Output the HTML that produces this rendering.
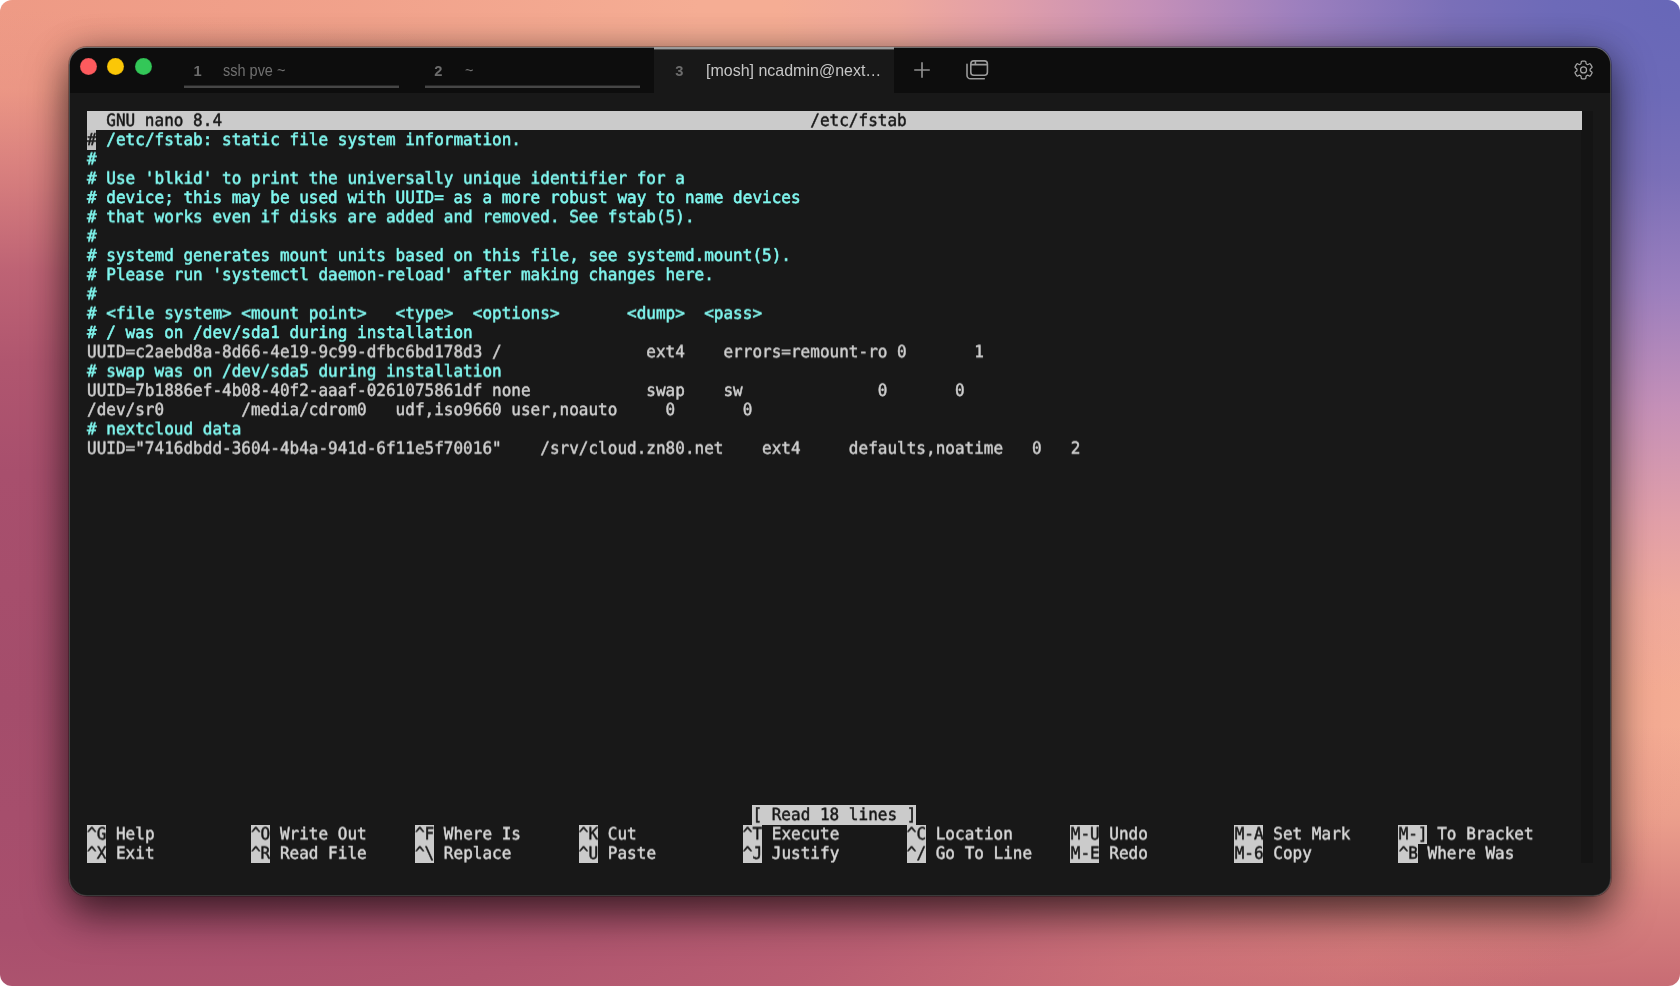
<!DOCTYPE html>
<html lang="en">
<head>
<meta charset="utf-8">
<title>nano /etc/fstab</title>
<style>
html,body{margin:0;padding:0;background:#fff;}
body{width:1680px;height:986px;position:relative;overflow:hidden;font-family:"Liberation Sans",sans-serif;}
#bg{position:absolute;left:0;top:0;width:1680px;height:986px;border-radius:12px;overflow:hidden;
 background:
  radial-gradient(ellipse 900px 690px at 100% 0%, #6767b8 0%, #6d6ab8 14%, #7a6fb8 25.5%, #9c7fbe 42%, #c590b8 59%, rgba(224,158,170,.92) 75.5%, rgba(234,165,164,.5) 87%, rgba(240,170,160,0) 100%),
  radial-gradient(ellipse 1600px 650px at 0% 700px, #a44d6b 0%, #a84f6d 35%, #b0566f 52%, rgba(184,92,114,.9) 66%, rgba(203,110,120,.62) 82%, rgba(222,130,125,.24) 94%, rgba(228,138,128,0) 106%),
  linear-gradient(to top, #c86c74 0, rgba(203,112,118,.72) 80px, rgba(214,127,122,.3) 170px, rgba(220,130,125,0) 260px),
  radial-gradient(ellipse 700px 500px at 0% 0%, #ee9a85 0%, rgba(238,154,133,.6) 50%, rgba(238,154,133,0) 100%),
  #f5ad94;
}
#win{position:absolute;left:69px;top:47px;width:1542px;height:849px;border-radius:18px;
 background:linear-gradient(#6c6c6c 0,#505050 12px,#464646 60px,#444 800px,#3a3a3a 100%);
 box-shadow:0 0 0 1px rgba(0,0,0,.26), 0 20px 42px rgba(0,0,0,.54), 0 2px 34px rgba(0,0,0,.3);}
#wi{position:absolute;left:1px;top:1px;right:1px;bottom:1px;border-radius:17px;overflow:hidden;background:#181818;}
#wo{position:absolute;left:-1px;top:-1px;width:1542px;height:849px;}
#tb{position:absolute;left:0;top:0;width:100%;height:46px;background:#0d0d0d;}
.tl{position:absolute;top:10.9px;width:17px;height:17px;border-radius:50%;box-shadow:inset 0 0 0 .6px rgba(0,0,0,.14);}
.tn{position:absolute;font-weight:bold;font-size:14.7px;line-height:20px;color:#6c6c6c;top:13.5px;}
.tx{position:absolute;font-size:16.2px;line-height:20px;color:#707070;top:13.4px;white-space:nowrap;transform-origin:0 50%;}
.ul{position:absolute;height:3px;width:214.7px;background:linear-gradient(#262626 0 1px,#464646 1px 3px);top:38px;}
#tt{position:absolute;left:0;top:0;width:100%;height:46px;will-change:transform;}
#t3{position:absolute;top:0;height:46px;left:584.6px;width:240.3px;background:#181818;}
#t3h{position:absolute;left:584.6px;top:0;width:240.3px;height:3px;background:linear-gradient(#9a9a9a 0 2px,#4c4c4c 2px 3px);}
#term{position:absolute;left:0;top:0;width:1680px;height:986px;font-family:"DejaVu Sans Mono","Liberation Mono",monospace;font-size:16px;letter-spacing:0.0106px;-webkit-text-stroke:0.45px;}
.r{position:absolute;left:86.85px;height:19.285px;line-height:19.285px;white-space:pre;color:#cfcfcf;transform-origin:0 0;will-change:transform;}
.g{transform-origin:0 0;transform:scaleY(1.05) skewX(.05deg);}
.r.c{color:#80f8f0;-webkit-text-stroke-width:.5px;}
.r.w{color:#d8d8d8;}
.inv,.cur{color:#141414;}
.b{position:absolute;background:#cbcbcb;}
.b.cu{background:#c0c0c0;}
#sb{position:absolute;left:1581px;top:111px;width:12px;height:752px;background:#141414;}
</style>
</head>
<body>
<div id="bg"></div>
<div id="win"><div id="wi"><div id="wo">
 <div id="tb">
  <div class="tl" style="left:10.7px;background:#fe5b5e"></div>
  <div class="tl" style="left:38.4px;background:#fbc707"></div>
  <div class="tl" style="left:66.2px;background:#33c758"></div>
  <div id="t3"></div>
  <div class="ul" style="left:115.3px"></div>
  <div class="ul" style="left:356.3px"></div>
  <div id="tt"><span class="tn" style="left:124.6px">1</span><span class="tx" style="left:154.3px;transform:scaleX(.895)">ssh pve ~</span>
  <span class="tn" style="left:365.3px">2</span><span class="tx" style="left:395.5px;transform:scaleX(.895)">~</span>
  <span class="tn" style="left:606.2px">3</span><span class="tx" style="left:636.5px;color:#c6c6c6;transform:scaleX(.988)">[mosh] ncadmin@next…</span></div>
  <svg style="position:absolute;left:840px;top:10px" width="26" height="26" viewBox="0 0 26 26"><path d="M13 5.2V20.8M5.2 13H20.8" stroke="#8e8e8e" stroke-width="1.7" fill="none"/></svg>
  <svg style="position:absolute;left:894px;top:9px" width="30" height="28" viewBox="0 0 30 28"><g fill="none" stroke="#9a9a9a" stroke-width="1.6"><rect x="7.8" y="4.9" width="16.6" height="14.4" rx="3"/><path d="M7.8 8.6H24.4M12.4 4.9V8.6"/><path d="M4 8.2V19.2a3.6 3.6 0 0 0 3.6 3.6H21.3" stroke-linecap="round"/></g></svg>
  <svg style="position:absolute;left:1502px;top:11px" width="24" height="24" viewBox="-12.55 -11.9 24 24"><g fill="none" stroke="#a6a6a6" stroke-width="1.25" stroke-linejoin="round"><circle r="3"/><path d="M3.21 -5.57Q2.38 -6.05 2.38 -7.15L2.38 -7.79Q2.38 -8.89 1.28 -8.89L-1.28 -8.89Q-2.38 -8.89 -2.38 -7.79L-2.38 -7.15Q-2.38 -6.05 -3.21 -5.57L-3.21 -5.57Q-4.05 -5.09 -5.00 -5.64L-5.55 -5.96Q-6.51 -6.51 -7.06 -5.55L-8.34 -3.33Q-8.89 -2.38 -7.93 -1.83L-7.38 -1.51Q-6.43 -0.96 -6.43 -0.00L-6.43 -0.00Q-6.43 0.96 -7.38 1.51L-7.93 1.83Q-8.89 2.38 -8.34 3.33L-7.06 5.55Q-6.51 6.51 -5.55 5.96L-5.00 5.64Q-4.05 5.09 -3.21 5.57L-3.21 5.57Q-2.38 6.05 -2.38 7.15L-2.38 7.79Q-2.38 8.89 -1.28 8.89L1.28 8.89Q2.38 8.89 2.38 7.79L2.38 7.15Q2.38 6.05 3.21 5.57L3.21 5.57Q4.05 5.09 5.00 5.64L5.55 5.96Q6.51 6.51 7.06 5.55L8.34 3.33Q8.89 2.38 7.93 1.83L7.38 1.51Q6.43 0.96 6.43 -0.00L6.43 -0.00Q6.43 -0.96 7.38 -1.51L7.93 -1.83Q8.89 -2.38 8.34 -3.33L7.06 -5.55Q6.51 -6.51 5.55 -5.96L5.00 -5.64Q4.05 -5.09 3.21 -5.57Z"/></g></svg>
 </div>
</div></div><div id="t3h"></div></div>
<div id="sb"></div>
<div id="bgl">
<div class="b" style="left:86.85px;top:111.00px;width:1494.74px;height:19.29px"></div>
<div class="b cu" style="left:86.85px;top:130.28px;width:9.64px;height:19.29px"></div>
<div class="b" style="left:752.25px;top:805.26px;width:163.94px;height:19.29px"></div>
<div class="b" style="left:86.85px;top:824.54px;width:19.29px;height:19.29px"></div>
<div class="b" style="left:250.79px;top:824.54px;width:19.29px;height:19.29px"></div>
<div class="b" style="left:414.73px;top:824.54px;width:19.29px;height:19.29px"></div>
<div class="b" style="left:578.67px;top:824.54px;width:19.29px;height:19.29px"></div>
<div class="b" style="left:742.61px;top:824.54px;width:19.29px;height:19.29px"></div>
<div class="b" style="left:906.55px;top:824.54px;width:19.29px;height:19.29px"></div>
<div class="b" style="left:1070.49px;top:824.54px;width:28.93px;height:19.29px"></div>
<div class="b" style="left:1234.43px;top:824.54px;width:28.93px;height:19.29px"></div>
<div class="b" style="left:1398.37px;top:824.54px;width:28.93px;height:19.29px"></div>
<div class="b" style="left:86.85px;top:843.83px;width:19.29px;height:19.29px"></div>
<div class="b" style="left:250.79px;top:843.83px;width:19.29px;height:19.29px"></div>
<div class="b" style="left:414.73px;top:843.83px;width:19.29px;height:19.29px"></div>
<div class="b" style="left:578.67px;top:843.83px;width:19.29px;height:19.29px"></div>
<div class="b" style="left:742.61px;top:843.83px;width:19.29px;height:19.29px"></div>
<div class="b" style="left:906.55px;top:843.83px;width:19.29px;height:19.29px"></div>
<div class="b" style="left:1070.49px;top:843.83px;width:28.93px;height:19.29px"></div>
<div class="b" style="left:1234.43px;top:843.83px;width:28.93px;height:19.29px"></div>
<div class="b" style="left:1398.37px;top:843.83px;width:19.29px;height:19.29px"></div>
</div>
<div id="term">
<div class="r " style="top:109px;transform:translateY(0.880px) skewX(.05deg)"><div class="g"><span class="inv">  GNU nano 8.4                                                             /etc/fstab                                                                      </span></div></div>
<div class="r c" style="top:129px;transform:translateY(0.165px) skewX(.05deg)"><div class="g"><span class="cur">#</span> /etc/fstab: static file system information.</div></div>
<div class="r c" style="top:148px;transform:translateY(0.450px) skewX(.05deg)"><div class="g">#</div></div>
<div class="r c" style="top:167px;transform:translateY(0.735px) skewX(.05deg)"><div class="g"># Use 'blkid' to print the universally unique identifier for a</div></div>
<div class="r c" style="top:187px;transform:translateY(0.020px) skewX(.05deg)"><div class="g"># device; this may be used with UUID= as a more robust way to name devices</div></div>
<div class="r c" style="top:206px;transform:translateY(0.305px) skewX(.05deg)"><div class="g"># that works even if disks are added and removed. See fstab(5).</div></div>
<div class="r c" style="top:225px;transform:translateY(0.590px) skewX(.05deg)"><div class="g">#</div></div>
<div class="r c" style="top:244px;transform:translateY(0.875px) skewX(.05deg)"><div class="g"># systemd generates mount units based on this file, see systemd.mount(5).</div></div>
<div class="r c" style="top:264px;transform:translateY(0.160px) skewX(.05deg)"><div class="g"># Please run 'systemctl daemon-reload' after making changes here.</div></div>
<div class="r c" style="top:283px;transform:translateY(0.445px) skewX(.05deg)"><div class="g">#</div></div>
<div class="r c" style="top:302px;transform:translateY(0.730px) skewX(.05deg)"><div class="g"># &lt;file system&gt; &lt;mount point&gt;   &lt;type&gt;  &lt;options&gt;       &lt;dump&gt;  &lt;pass&gt;</div></div>
<div class="r c" style="top:322px;transform:translateY(0.015px) skewX(.05deg)"><div class="g"># / was on /dev/sda1 during installation</div></div>
<div class="r n" style="top:341px;transform:translateY(0.300px) skewX(.05deg)"><div class="g">UUID=c2aebd8a-8d66-4e19-9c99-dfbc6bd178d3 /               ext4    errors=remount-ro 0       1</div></div>
<div class="r c" style="top:360px;transform:translateY(0.585px) skewX(.05deg)"><div class="g"># swap was on /dev/sda5 during installation</div></div>
<div class="r n" style="top:379px;transform:translateY(0.870px) skewX(.05deg)"><div class="g">UUID=7b1886ef-4b08-40f2-aaaf-0261075861df none            swap    sw              0       0</div></div>
<div class="r n" style="top:399px;transform:translateY(0.155px) skewX(.05deg)"><div class="g">/dev/sr0        /media/cdrom0   udf,iso9660 user,noauto     0       0</div></div>
<div class="r c" style="top:418px;transform:translateY(0.440px) skewX(.05deg)"><div class="g"># nextcloud data</div></div>
<div class="r n" style="top:437px;transform:translateY(0.725px) skewX(.05deg)"><div class="g">UUID="7416dbdd-3604-4b4a-941d-6f11e5f70016"    /srv/cloud.zn80.net    ext4     defaults,noatime   0   2</div></div>
<div class="r n" style="top:804px;transform:translateY(0.140px) skewX(.05deg)"><div class="g">                                                                     <span class="inv">[ Read 18 lines ]</span></div></div>
<div class="r w" style="top:823px;transform:translateY(0.425px) skewX(.05deg)"><div class="g"><span class="inv">^G</span> Help          <span class="inv">^O</span> Write Out     <span class="inv">^F</span> Where Is      <span class="inv">^K</span> Cut           <span class="inv">^T</span> Execute       <span class="inv">^C</span> Location      <span class="inv">M-U</span> Undo         <span class="inv">M-A</span> Set Mark     <span class="inv">M-]</span> To Bracket   </div></div>
<div class="r w" style="top:842px;transform:translateY(0.710px) skewX(.05deg)"><div class="g"><span class="inv">^X</span> Exit          <span class="inv">^R</span> Read File     <span class="inv">^\</span> Replace       <span class="inv">^U</span> Paste         <span class="inv">^J</span> Justify       <span class="inv">^/</span> Go To Line    <span class="inv">M-E</span> Redo         <span class="inv">M-6</span> Copy         <span class="inv">^B</span> Where Was     </div></div>
</div>
</body>
</html>
